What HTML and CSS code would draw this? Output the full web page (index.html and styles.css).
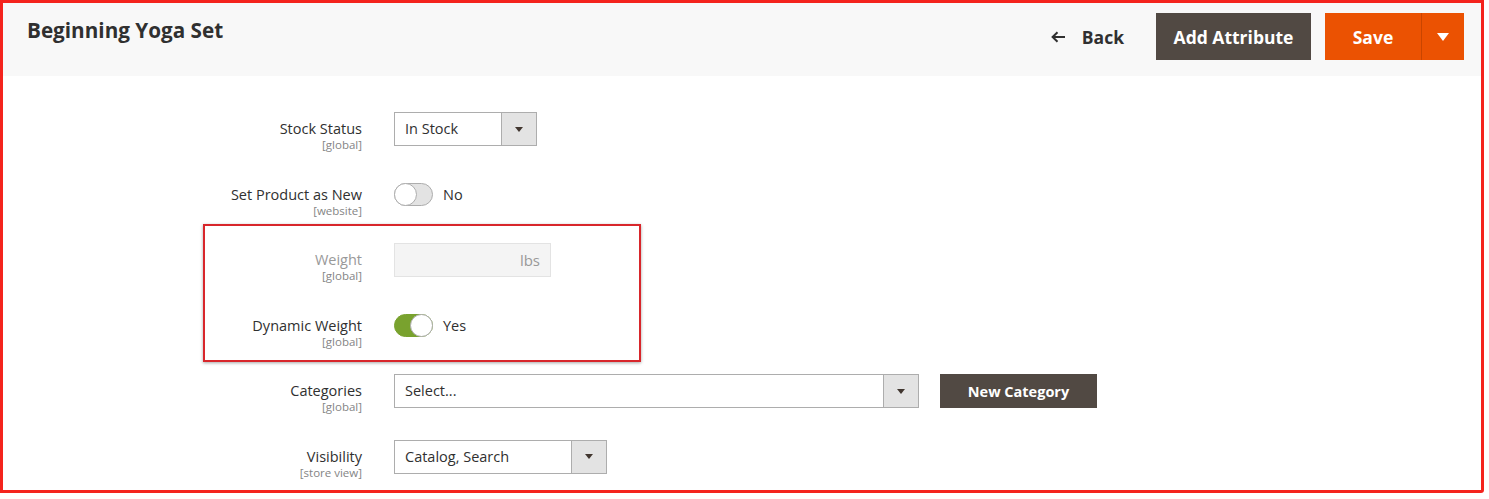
FILE: index.html
```html
<!DOCTYPE html>
<html lang="en">
<head>
  <meta charset="UTF-8">
  <title>Beginning Yoga Set</title>
  <link rel="stylesheet" href="styles.css">
</head>
<body>

<div class="frame">
  <!-- Page header -->
  <div class="page-header">
    <h1 class="page-title">Beginning Yoga Set</h1>
    <div class="page-actions">
      <a class="back-link" href="#">
        <svg width="15" height="12" viewBox="0 0 15 12"><path d="M14 6H2M6.5 1.2L1.6 6l4.9 4.8" fill="none" stroke="#303030" stroke-width="2"/></svg>
        <span>Back</span>
      </a>
      <button class="btn btn-dark btn-large">Add Attribute</button>
      <div class="split-btn">
        <button class="btn btn-save">Save</button>
        <button class="btn btn-save-toggle"><span class="caret-white"></span></button>
      </div>
    </div>
  </div>

  <!-- Product form -->
  <div class="product-form">
    <div class="field">
      <div class="field-label">Stock Status<span class="scope">[global]</span></div>
      <div class="select select-stock">
        <span class="select-value">In Stock</span>
        <span class="select-arrow"><span class="caret"></span></span>
      </div>
    </div>

    <div class="field">
      <div class="field-label">Set Product as New<span class="scope">[website]</span></div>
      <div class="switch-wrap">
        <span class="switch"><span class="knob"></span></span>
        <span class="switch-text">No</span>
      </div>
    </div>

    <div class="highlight-group">
      <div class="field">
        <div class="field-label disabled">Weight<span class="scope">[global]</span></div>
        <div class="input-addon">lbs</div>
      </div>

      <div class="field">
        <div class="field-label">Dynamic Weight<span class="scope">[global]</span></div>
        <div class="switch-wrap">
          <span class="switch on"><span class="knob"></span></span>
          <span class="switch-text">Yes</span>
        </div>
      </div>
    </div>

    <div class="field">
      <div class="field-label">Categories<span class="scope">[global]</span></div>
      <div class="select select-categories">
        <span class="select-value">Select...</span>
        <span class="select-arrow"><span class="caret"></span></span>
      </div>
      <button class="btn btn-dark btn-small">New Category</button>
    </div>

    <div class="field">
      <div class="field-label">Visibility<span class="scope">[store view]</span></div>
      <div class="select select-visibility">
        <span class="select-value">Catalog, Search</span>
        <span class="select-arrow"><span class="caret"></span></span>
      </div>
    </div>
  </div>
</div>

</body>
</html>
```

FILE: styles.css
```css
body {
  margin: 0;
  padding: 0;
  background-color: #fff;
  font-family: 'Open Sans', 'Liberation Sans', sans-serif;
  color: #303030;
}
.frame {
  width: 1484px;
  height: 493px;
  box-sizing: border-box;
  border: 3px solid #f4231d;
  border-radius: 0 0 3px 0;
  overflow: hidden;
}
/* Header */
.page-header {
  height: 73px;
  background-color: #f8f8f8;
  display: flex;
  justify-content: space-between;
  align-items: flex-start;
  padding: 0 17px 0 24px;
}
.page-title {
  margin: 0;
  padding-top: 13px;
  font-size: 20.7px;
  line-height: 28px;
  font-weight: 700;
  color: #303030;
}
.page-actions {
  display: flex;
  align-items: center;
  margin-top: 10px;
}
.back-link {
  display: flex;
  align-items: center;
  gap: 16px;
  color: #303030;
  text-decoration: none;
  font-size: 17.5px;
  font-weight: 700;
  margin-right: 32px;
}
.btn {
  border: none;
  font-family: inherit;
  font-weight: 700;
  color: #fff;
  cursor: pointer;
  padding: 0;
}
.btn-dark {
  background-color: #514943;
}
.btn-large {
  width: 155px;
  height: 47px;
  font-size: 17.5px;
  margin-right: 14px;
}
.split-btn {
  display: flex;
  height: 47px;
}
.btn-save {
  width: 96px;
  background-color: #eb5202;
  font-size: 17.5px;
}
.btn-save-toggle {
  width: 43px;
  background-color: #eb5202;
  border-left: 1px solid #c94500;
  display: flex;
  align-items: center;
  justify-content: center;
}
.caret-white {
  width: 0;
  height: 0;
  border-left: 6px solid transparent;
  border-right: 6px solid transparent;
  border-top: 8px solid #fff;
}
/* Form */
.product-form {
  padding: 36px 0 0 144px;
}
.field {
  display: flex;
  align-items: flex-start;
  height: 34px;
  margin-bottom: 31.5px;
}
.field-label {
  width: 215px;
  text-align: right;
  font-size: 14.5px;
  line-height: 19px;
  padding-top: 7px;
  color: #303030;
  margin-right: 32px;
}
.field-label.disabled {
  color: #999;
}
.scope {
  display: block;
  font-size: 11.5px;
  line-height: 13px;
  color: #858585;
}
.select {
  display: flex;
  height: 34px;
  box-sizing: border-box;
  border: 1px solid #adadad;
  background-color: #fff;
}
.select-value {
  flex: 1;
  padding-left: 10px;
  font-size: 14.5px;
  line-height: 31px;
  color: #303030;
}
.select-arrow {
  width: 34px;
  border-left: 1px solid #adadad;
  background-color: #e3e3e3;
  display: flex;
  align-items: center;
  justify-content: center;
}
.caret {
  width: 0;
  height: 0;
  border-left: 4.5px solid transparent;
  border-right: 4.5px solid transparent;
  border-top: 5px solid #41362f;
}
.select-stock {
  width: 143px;
}
.select-categories {
  width: 525px;
}
.select-visibility {
  width: 213px;
}
.btn-small {
  width: 157px;
  height: 34px;
  font-size: 14.5px;
  margin-left: 21px;
}
.switch-wrap {
  display: flex;
  align-items: center;
  gap: 10px;
  height: 34px;
}
.switch {
  position: relative;
  width: 39px;
  height: 23px;
  box-sizing: border-box;
  border-radius: 12px;
  background-color: #e3e3e3;
  border: 1px solid #adadad;
}
.switch .knob {
  position: absolute;
  top: -1px;
  left: -1px;
  width: 23px;
  height: 23px;
  box-sizing: border-box;
  border-radius: 50%;
  background-color: #fff;
  border: 1px solid #adadad;
}
.switch.on {
  background-color: #79a22e;
  border-color: #79a22e;
}
.switch.on .knob {
  left: auto;
  right: -1px;
}
.switch-text {
  font-size: 14.5px;
  color: #303030;
}
.input-addon {
  width: 157px;
  height: 34px;
  box-sizing: border-box;
  border: 1px solid #e3e3e3;
  background-color: #f4f4f4;
  text-align: right;
  padding-right: 10px;
  font-size: 15px;
  line-height: 32px;
  color: #999;
}
/* annotation box drawn round the weight fields */
.highlight-group {
  position: relative;
}
.highlight-group::after {
  content: '';
  position: absolute;
  top: -19px;
  left: 56px;
  width: 438px;
  height: 138px;
  box-sizing: border-box;
  border: 2px solid #d8262b;
  box-shadow: 0 1px 3px rgba(0, 0, 0, 0.35);
  pointer-events: none;
}
```
